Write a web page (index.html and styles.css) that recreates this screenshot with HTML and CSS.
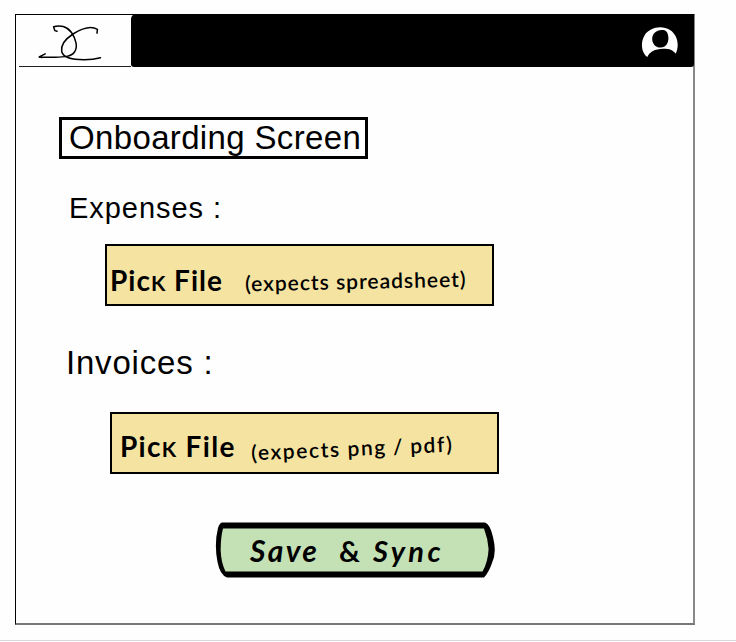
FILE: index.html
```html
<!DOCTYPE html>
<html lang="en">
<head>
<meta charset="utf-8">
<title>Onboarding Screen</title>
<link rel="stylesheet" href="styles.css">
</head>
<body>
<div class="window">
  <header class="topbar">
    <div class="brand">
      <svg class="logo" width="66" height="40" viewBox="36 22 66 40" fill="none" stroke="#000" stroke-width="1.5" stroke-linecap="round" stroke-linejoin="round">
        <path d="M57 31.2 54.8 30.6 53.6 26.8C60 24.6 67 26.4 71.5 32.5C76 39 78 47 74.5 52C70.5 57.5 62 57 52 57.2L39.5 57.2M45.2 53.8 39.2 56.8 41.8 57.6"/>
        <path d="M97 33.2 97.4 29.3C91 25.6 81 29 73 34C66 38.6 60.5 45 61.7 51.5C63 57 69 59 79 59.5Q91 60.2 100.5 57.8"/>
      </svg>
    </div>
    <div class="bar">
      <svg class="avatar" width="40" height="34" viewBox="640 26 40 34">
        <path fill="#fff" d="M647.3 57C641 52.5 640.5 42 644.5 35.5C649 28 661 24.6 670 30C678 35 679.5 46 675.7 53.7C673 50 669 48.7 663 48.8C655 49 649.5 52 647.3 57Z"/>
        <path fill="#000" d="M660 30.2C665 29.5 667.5 31 668.2 36C669.2 41 667 47.6 660.5 47.6C655 47.6 652 43 652.2 38.5C652.4 34 655.5 30.7 660 30.2Z"/>
      </svg>
    </div>
  </header>
  <main class="content">
    <h1 class="title">Onboarding Screen</h1>
    <h2 class="label expenses-label">Expenses :</h2>
    <button class="picker expenses-picker"><span class="pick">Pic<span class="short-k">k</span> File</span><span class="hint">(expects spreadsheet)</span></button>
    <h2 class="label invoices-label">Invoices :</h2>
    <button class="picker invoices-picker"><span class="pick">Pic<span class="short-k">k</span> File</span><span class="hint">(expects png<span class="slash">/</span>pdf)</span></button>
    <button class="save">
      <svg class="save-shape" width="280" height="57" viewBox="215 521 280 57">
        <path fill="#000" d="M222 522.5H485Q490 524 493 537Q497 553 492 563Q489 572 484 577.5H227Q220 575 217.5 562Q214 544 218 528Q219.5 523 222 522.5Z"/>
        <path fill="#c4e0b5" d="M223 528.5H484Q488 539 488.6 549Q488 562 482.5 571.5H225.5Q221 562 220.7 551Q220.5 538 223 528.5Z"/>
      </svg>
      <span class="save-text"><span class="word-save">Save</span><span class="word-and">&amp;</span><span class="word-sync">Sync</span></span>
    </button>
  </main>
</div>
<div class="rule"></div>
</body>
</html>
```
FILE: styles.css
```css
* { box-sizing: border-box; }
body {
  margin: 0;
  height: 642px;
  overflow: hidden;
  display: flex;
  flex-direction: column;
  background: #fefefe;
  color: #000;
  font-family: "Liberation Sans", Arial, sans-serif;
}
.window {
  width: 680px;
  height: 611px;
  margin: 14px 0 0 15px;
  border: 1.5px solid #000;
  border-right: 2px solid #888;
  border-bottom: 2px solid #777;
  flex: none;
}
.topbar {
  display: flex;
  height: 53px;
  margin: -1px -1px 0 0;
}
.brand {
  width: 112px;
  margin-left: 3px;
  padding: 8px 0 0 17px;
  border-bottom: 1.5px solid #222;
}
.logo { display: block; }
.bar {
  flex: 1;
  display: flex;
  justify-content: flex-end;
  padding: 12px 14px 0 0;
  background: #000;
  border-radius: 5px 0 3px 3px;
}
.content {
  display: flex;
  flex-direction: column;
  align-items: flex-start;
}
h1, h2 { margin: 0; font-weight: 400; white-space: nowrap; }
button { padding: 0; border: 0; color: #000; flex: none; }
.title {
  width: 309px;
  height: 42px;
  margin: 50px 0 0 43px;
  padding-left: 7px;
  border: 3px solid #000;
  font-size: 33px;
  line-height: 36px;
  letter-spacing: .35px;
}
.label { height: 40px; line-height: 40px; }
.expenses-label { margin: 29px 0 0 53px; font-size: 29px; letter-spacing: .95px; }
.invoices-label { margin: 37px 0 0 50px; font-size: 33px; letter-spacing: .8px; }
.picker {
  display: flex;
  align-items: baseline;
  width: 389px;
  height: 62px;
  border: 2px solid #000;
  background: #f5e4a1;
  font-family: Lato, sans-serif;
  white-space: nowrap;
}
.expenses-picker { margin: 16px 0 0 89px; padding: 17px 0 0 3px; }
.invoices-picker { margin: 29px 0 0 94px; padding: 15px 0 0 8px; }
.pick { width: 135px; font-size: 28px; font-weight: 700; line-height: 34px; text-align: left; letter-spacing: 1px; }
.invoices-picker .pick { width: 131px; letter-spacing: 1.3px; }
.short-k { font-size: 21px; text-transform: uppercase; }
.hint { font-size: 21px; font-weight: 600; letter-spacing: 1px; transform: translateY(-2px) rotate(-1.2deg); }
.invoices-picker .hint { letter-spacing: 1.6px; transform: translateY(-1px) rotate(-2.5deg); }
.slash { margin: 0 6px; }
.save {
  display: grid;
  width: 280px;
  height: 57px;
  margin: 47px 0 0 199px;
  background: none;
}
.save-shape, .save-text { grid-area: 1 / 1; }
.save-text {
  display: flex;
  align-items: baseline;
  padding: 11px 0 0 35px;
  font: italic 700 30px/36px Lato, sans-serif;
}
.word-save { width: 89px; text-align: left; letter-spacing: 2.3px; }
.word-and { width: 34px; text-align: left; font-style: normal; font-size: 29px; }
.word-sync { font-size: 29px; letter-spacing: 3.4px; }
.rule { height: 1px; margin-top: 15px; background: #d8d8d8; flex: none; }
```
